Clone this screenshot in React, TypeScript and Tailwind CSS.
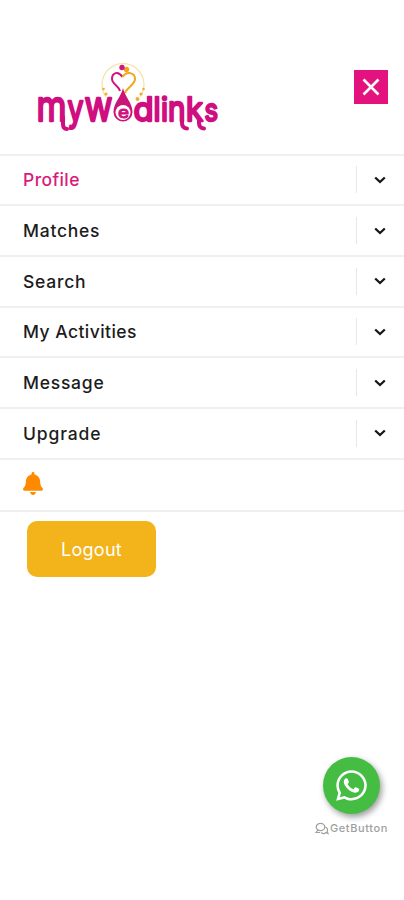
import { FaBell, FaWhatsapp } from "react-icons/fa";

const menuItems = [
  { label: "Profile", className: "text-[#d81b7a] tracking-[0.4px]" },
  { label: "Matches", className: "text-[#1c1c1c] tracking-[0.75px]" },
  { label: "Search", className: "text-[#1c1c1c] tracking-[0.75px]" },
  { label: "My Activities", className: "text-[#1c1c1c] tracking-[0.45px]" },
  { label: "Message", className: "text-[#1c1c1c] tracking-[0.75px]" },
  { label: "Upgrade", className: "text-[#1c1c1c] tracking-[0.85px]" },
];

const letters = [
  { char: "m", x: 6.5, y: 66, width: 30, size: 42 },
  { char: "y", x: 37.5, y: 66, width: 16, size: 37 },
  { char: "w", x: 54.5, y: 66, width: 28, size: 41 },
  { char: "e", x: 88, y: 62.5, width: 11, size: 16 },
  { char: "d", x: 103.5, y: 66, width: 20, size: 32 },
  { char: "l", x: 123.5, y: 66, width: 7, size: 32 },
  { char: "i", x: 131, y: 66, width: 7, size: 32 },
  { char: "n", x: 138, y: 66, width: 17.5, size: 35 },
  { char: "k", x: 156, y: 66, width: 17, size: 32 },
  { char: "s", x: 174.5, y: 66, width: 13.5, size: 30 },
];

const Logo = () => (
  <svg width="200" height="85" viewBox="0 0 200 85" fill="none">
    <path d="M76 42A21 21 0 1 1 110 42" stroke="#f7e2a5" strokeWidth="1.2" />
    <g fill="#eeb02c">
      <circle cx="73.500" cy="34" r="1.300" />
      <circle cx="76" cy="39" r="1.600" />
      <circle cx="79.500" cy="44" r="2" />
      <circle cx="113.500" cy="34" r="1.300" />
      <circle cx="111" cy="39" r="1.600" />
      <circle cx="107.500" cy="44" r="2" />
    </g>
    <path d="M92.500 22C88 15 82 18 82 24C82 29 89 31 90 36" stroke="#d5147b" strokeWidth="2" />
    <path d="M92.500 22C97 15 105 18 105 24C105 30 96 33 95 38" stroke="#f5a51d" strokeWidth="2" />
    <circle cx="96.500" cy="14.500" r="2.700" fill="#f5a51d" />
    <circle cx="92" cy="12.500" r="2.700" fill="#d5147b" />
    <path d="M93 33C95 42 102.500 48 102.500 57A9.500 9.500 0 0 1 83.500 57C83.500 48 91 42 93 33Z" fill="#c91578" />
    <circle cx="93" cy="57.500" r="7.500" fill="#fff" />
    <g stroke="#cf0f80" strokeWidth="4" strokeLinecap="round">
      <path d="M33 62v7q0 5 4 5" />
      <path d="M152 62v6q0 5 5 5.500" />
      <path d="M169 64v4q0 5 5 5.500" />
    </g>
    <text fill="#cf0f80" stroke="#cf0f80" strokeLinejoin="round" fontFamily="Inter, sans-serif" fontWeight="400">
      {letters.map((l) => (
        <tspan
          key={l.char}
          x={l.x}
          y={l.y}
          fontSize={l.size}
          strokeWidth={l.char === "e" ? 1 : 2.3}
          textLength={l.width}
          lengthAdjust="spacingAndGlyphs"
        >
          {l.char}
        </tspan>
      ))}
    </text>
  </svg>
);

const App = () => (
  <div className="flex h-[900px] w-[404px] flex-col bg-white font-['Inter',sans-serif]">
    <header className="flex h-[153.5px] shrink-0 items-start justify-between pt-[55px] pr-4 pl-[30px]">
      <Logo />
      <button aria-label="Close" className="mt-[15px] flex size-[34px] items-center justify-center bg-[#e4127f]">
        <svg width="18" height="18" viewBox="0 0 18 18" stroke="#fff" strokeWidth="2.6">
          <path d="M1.500 1.500l15 15M16.500 1.500l-15 15" />
        </svg>
      </button>
    </header>

    <nav>
      {menuItems.map((item) => (
        <div
          key={item.label}
          className="flex h-[50.7px] items-center justify-between border-t-2 border-[#f0f0f0] pl-[23px]"
        >
          <span className={`pt-px text-[17.5px] font-medium ${item.className}`}>{item.label}</span>
          <div className="flex h-[27px] w-12 items-center justify-center border-l border-[#e8e8e8] pr-[2px]">
            <svg width="12" height="8" viewBox="0 0 12 8" fill="none" stroke="#171717" strokeWidth="2.3">
              <path d="M1.200 1.500L6 6l4.800-4.500" />
            </svg>
          </div>
        </div>
      ))}
      <div className="flex h-[54.5px] items-center border-y-2 border-[#f0f0f0] pb-[3px] pl-[23px]">
        <FaBell className="h-[23px] w-5 text-[#ff8a00]" />
      </div>
    </nav>

    <button className="mt-[9px] ml-[27px] flex h-[56px] w-[129px] items-center justify-center rounded-[10px] bg-[#f2b31b] text-[18px] tracking-[0.3px] text-white">
      Logout
    </button>

    <footer className="mt-auto mb-[63px] flex flex-col items-end pr-4">
      <div className="mr-2 flex size-[57px] items-center justify-center rounded-full bg-[#45bd43] shadow-[2px_3px_6px_rgba(0,0,0,0.4)]">
        <FaWhatsapp className="size-[35px] text-white" />
      </div>
      <div className="mt-[6px] flex h-[17px] items-center gap-[1px] text-[#a0a0a0]">
        <svg width="14" height="13" viewBox="0 0 14 13" fill="none" stroke="currentColor" strokeWidth="1.2">
          <ellipse cx="5.500" cy="5" rx="4.300" ry="3.600" />
          <path d="M3 8L1 10.500h4M6 10.500c2 1.500 4 1 5 0l2 1-.8-2.500c1-2-.5-3.800-2.400-4" />
        </svg>
        <span className="text-[11px] font-medium tracking-[0.6px]">GetButton</span>
      </div>
    </footer>
  </div>
);

export default App;
